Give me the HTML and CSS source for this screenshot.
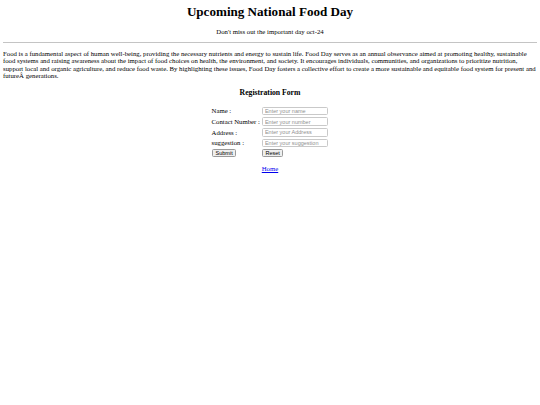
FILE: index.html
```html
<!DOCTYPE html>
<html lang="en">
<head>
<meta charset="utf-8">
<title>Upcoming National Food Day</title>
<link rel="stylesheet" href="styles.css">
</head>
<body class="page">
  <h1 class="title">Upcoming National Food Day</h1>
  <p class="tagline">Don't miss out the important day oct-24</p>
  <hr class="divider">
  <p class="intro">Food is a fundamental aspect of human well-being, providing the necessary nutrients and energy to sustain life. Food Day serves as an annual observance aimed at promoting healthy, sustainable food systems and raising awareness about the impact of food choices on health, the environment, and society. It encourages individuals, communities, and organizations to prioritize nutrition, support local and organic agriculture, and reduce food waste. By highlighting these issues, Food Day fosters a collective effort to create a more sustainable and equitable food system for present and futureÂ&nbsp;generations.</p>
  <h3 class="form-title">Registration Form</h3>
  <form class="reg-form">
    <table class="reg-table">
      <tr><td class="lbl">Name :</td><td class="cell"><input class="field" type="text" placeholder="Enter your name"></td></tr>
      <tr><td class="lbl">Contact Number :</td><td class="cell"><input class="field" type="text" placeholder="Enter your number"></td></tr>
      <tr><td class="lbl">Address :</td><td class="cell"><input class="field" type="text" placeholder="Enter your Address"></td></tr>
      <tr><td class="lbl">suggestion :</td><td class="cell"><input class="field" type="text" placeholder="Enter your suggestion"></td></tr>
      <tr><td class="cell"><button class="btn" type="submit">Submit</button></td><td class="cell"><button class="btn" type="reset">Reset</button></td></tr>
    </table>
  </form>
  <p class="home"><a class="home-link" href="#">Home</a></p>
</body>
</html>
```
FILE: styles.css
```css
html {
  background: #ffffff;
}
.page {
  margin: 3px;
  font-family: "Liberation Serif", "Times New Roman", serif;
  font-size: 6.75px;
  line-height: 7.5px;
  color: #000;
}
.title {
  text-align: center;
  font-size: 13.1px;
  line-height: 15px;
  font-weight: bold;
  margin: 1px 0 9px;
}
.tagline {
  text-align: center;
  margin: 0 0 6.6px;
}
.divider {
  margin: 0;
  height: 0;
  border: 0;
  border-top: 1px solid #c4c4c4;
}
.intro {
  margin: 6.6px 0;
  line-height: 7.5px;
}
.form-title {
  text-align: center;
  font-size: 7.7px;
  line-height: 8.8px;
  font-weight: bold;
  margin: 9.5px 0 7.7px;
}
.reg-form {
  margin: 0;
}
.reg-table {
  margin: 0 auto;
  border-spacing: 0;
}
.lbl {
  padding: 1px 1.5px 1px 0;
  vertical-align: middle;
}
.cell {
  padding: 1px 0.5px;
  vertical-align: middle;
}
.field {
  display: block;
  box-sizing: border-box;
  font-family: "Liberation Sans", Arial, sans-serif;
  font-size: 5.5px;
  height: 8.7px;
  width: 66px;
  padding: 0 2px;
  margin: 0;
  border: 1px solid #c9c9c9;
  border-radius: 1.5px;
}
.field::placeholder {
  color: #909090;
}
.btn {
  display: block;
  box-sizing: border-box;
  font-family: "Liberation Sans", Arial, sans-serif;
  font-size: 5.5px;
  height: 8px;
  line-height: 6px;
  padding: 0 2.5px;
  margin: 0;
  background: #efefef;
  border: 1px solid #9a9a9a;
  border-radius: 1.5px;
  color: #000;
}
.home {
  text-align: center;
  margin: 7px 0 0;
}
.home-link {
  color: #0000ee;
  text-decoration: underline;
}
```
